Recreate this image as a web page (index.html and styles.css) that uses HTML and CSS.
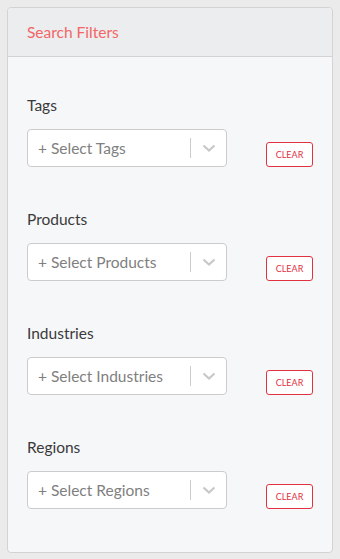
FILE: index.html
```html
<!DOCTYPE html>
<html lang="en">
<head>
    <meta charset="UTF-8">
    <meta name="viewport" content="width=device-width, initial-scale=1.0">
    <title>Search Filters</title>
    <link rel="stylesheet" href="styles.css">
</head>
<body>
    <div class="filter-card">
        <div class="filter-header">Search Filters</div>

        <div class="filter-body">
            <!-- Tags -->
            <div class="filter-group">
                <div class="filter-label">Tags</div>
                <div class="filter-row">
                    <div class="select-box">
                        <span class="placeholder">+ Select Tags</span>
                        <span class="separator"></span>
                        <span class="arrow">
                            <svg width="14" height="9" viewBox="0 0 14 9"><path d="M1.5 1.5 L7 6.5 L12.5 1.5" fill="none" stroke="#c8c8c8" stroke-width="2.2"/></svg>
                        </span>
                    </div>
                    <button class="clear-btn">Clear</button>
                </div>
            </div>

            <!-- Products -->
            <div class="filter-group">
                <div class="filter-label">Products</div>
                <div class="filter-row">
                    <div class="select-box">
                        <span class="placeholder">+ Select Products</span>
                        <span class="separator"></span>
                        <span class="arrow">
                            <svg width="14" height="9" viewBox="0 0 14 9"><path d="M1.5 1.5 L7 6.5 L12.5 1.5" fill="none" stroke="#c8c8c8" stroke-width="2.2"/></svg>
                        </span>
                    </div>
                    <button class="clear-btn">Clear</button>
                </div>
            </div>

            <!-- Industries -->
            <div class="filter-group">
                <div class="filter-label">Industries</div>
                <div class="filter-row">
                    <div class="select-box">
                        <span class="placeholder">+ Select Industries</span>
                        <span class="separator"></span>
                        <span class="arrow">
                            <svg width="14" height="9" viewBox="0 0 14 9"><path d="M1.5 1.5 L7 6.5 L12.5 1.5" fill="none" stroke="#c8c8c8" stroke-width="2.2"/></svg>
                        </span>
                    </div>
                    <button class="clear-btn">Clear</button>
                </div>
            </div>

            <!-- Regions -->
            <div class="filter-group">
                <div class="filter-label">Regions</div>
                <div class="filter-row">
                    <div class="select-box">
                        <span class="placeholder">+ Select Regions</span>
                        <span class="separator"></span>
                        <span class="arrow">
                            <svg width="14" height="9" viewBox="0 0 14 9"><path d="M1.5 1.5 L7 6.5 L12.5 1.5" fill="none" stroke="#c8c8c8" stroke-width="2.2"/></svg>
                        </span>
                    </div>
                    <button class="clear-btn">Clear</button>
                </div>
            </div>
        </div>
    </div>
</body>
</html>
```

FILE: styles.css
```css
body {
    background-color: #ebebeb;
    font-family: 'Lato', 'Open Sans', sans-serif;
    margin: 0;
    padding: 7px;
}

/* Card */
.filter-card {
    width: 326px;
    box-sizing: border-box;
    border: 1px solid #d3d3d3;
    border-radius: 4px;
    overflow: hidden;
    background-color: #f6f7f9;
}

.filter-header {
    height: 48px;
    line-height: 48px;
    padding-left: 19px;
    background-color: #ecedef;
    border-bottom: 1px solid #d3d3d3;
    color: #f26666;
    font-size: 15.5px;
}

.filter-body {
    padding: 38px 0 43px 19px;
    display: flex;
    flex-direction: column;
    gap: 42px;
}

.filter-label {
    font-size: 15.5px;
    line-height: 20px;
    color: #3a3a3a;
    margin-bottom: 14px;
}

.filter-row {
    display: flex;
    align-items: flex-end;
}

/* Select */
.select-box {
    width: 200px;
    height: 38px;
    box-sizing: border-box;
    background-color: white;
    border: 1px solid #cccccc;
    border-radius: 4px;
    display: flex;
    align-items: center;
}

.placeholder {
    flex: 1;
    padding-left: 10px;
    font-size: 15.5px;
    color: #808080;
}

.separator {
    width: 1px;
    height: 20px;
    background-color: #cccccc;
}

.arrow {
    width: 35px;
    display: flex;
    justify-content: center;
    align-items: center;
}

/* Clear button */
.clear-btn {
    margin-left: 39px;
    width: 47px;
    height: 25px;
    padding: 0;
    background-color: white;
    border: 1px solid #e0323f;
    border-radius: 3px;
    color: #e0323f;
    font-family: inherit;
    font-size: 9px;
    text-transform: uppercase;
    cursor: pointer;
}
```
